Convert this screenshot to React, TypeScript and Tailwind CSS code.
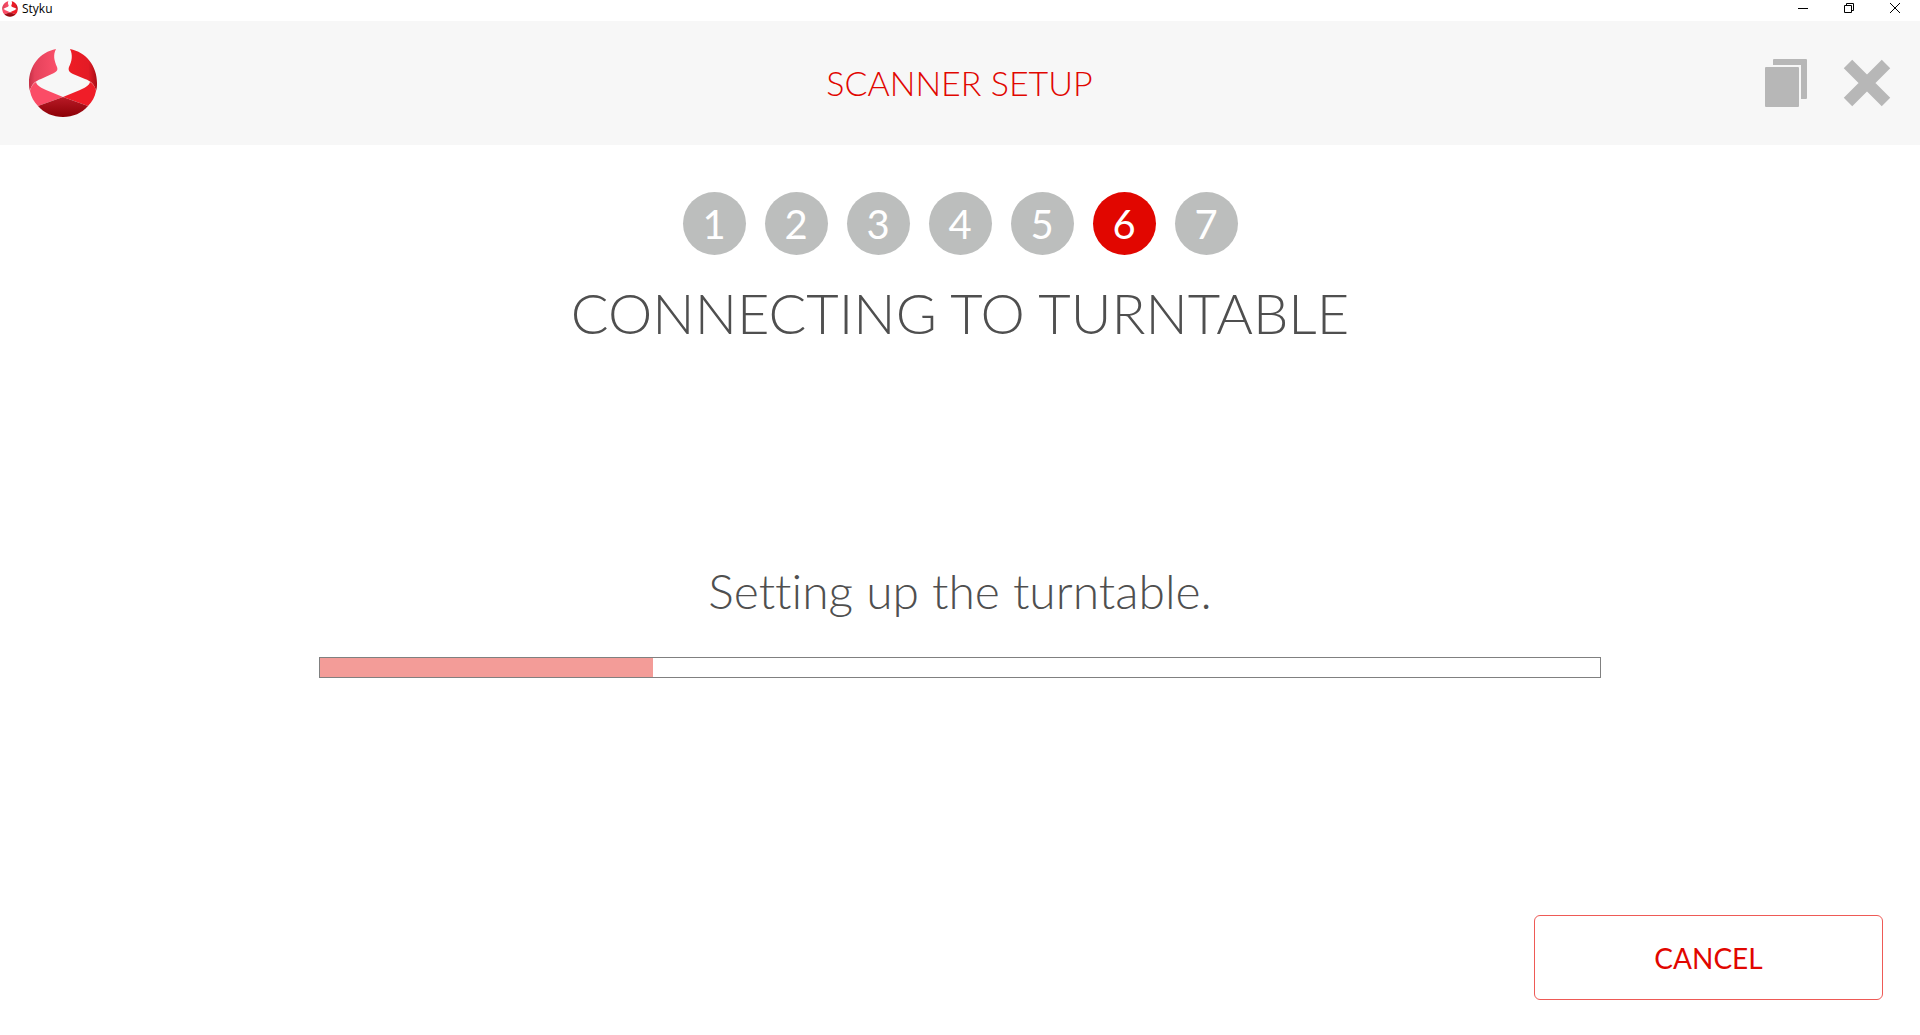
import React, { useState } from 'react';

const STEPS = [1, 2, 3, 4, 5, 6, 7];

function Logo({ className }: { className: string }) {
  return (
    <svg viewBox="0 0 70 70" className={className} aria-hidden="true">
      <defs>
        <linearGradient id="logo-left" x1="0" y1="0" x2="1" y2="0">
          <stop offset="0" stopColor="#c42f45" />
          <stop offset="0.2" stopColor="#e5425b" />
          <stop offset="1" stopColor="#fb506a" />
        </linearGradient>
        <linearGradient id="logo-right" x1="0" y1="0" x2="1" y2="0">
          <stop offset="0" stopColor="#ee1c25" />
          <stop offset="0.7" stopColor="#e31b25" />
          <stop offset="1" stopColor="#a80c14" />
        </linearGradient>
        <linearGradient id="logo-base" x1="0" y1="0" x2="0" y2="1">
          <stop offset="0" stopColor="#b81a26" />
          <stop offset="1" stopColor="#8c0006" />
        </linearGradient>
      </defs>
      <path
        d="M28 1C12 4 1 18 1 35C1 38 1 40 2 43C3 37 7 33 13 31L26 25C29 23 30 22 29 19C26 12 25 7 28 1Z"
        fill="url(#logo-left)"
      />
      <path
        d="M42 1C58 4 69 18 69 35C69 38 69 40 68 43C67 37 63 33 57 31L45 26C41 24 40 22 41 19C44 13 45 7 42 1Z"
        fill="url(#logo-right)"
      />
      <path d="M2 43C3 38 5 36 8 34C9 38 14 40 18 42L35 49L10 58C6 54 3 49 2 43Z" fill="#fb4c66" />
      <path d="M68 43C67 38 65 36 62 34C61 38 56 40 52 42L35 49L60 58C64 54 67 49 68 43Z" fill="#f01d28" />
      <path d="M35 49L60 58C54 65 45 69 35 69C25 69 16 65 10 58Z" fill="url(#logo-base)" />
    </svg>
  );
}

export default function App() {
  const [currentStep] = useState(6);
  const [progress] = useState(26);

  return (
    <div className="flex min-h-screen flex-col bg-white font-['Lato','Open_Sans',sans-serif] text-[#4f4f4f]">
      {/* Window title bar */}
      <div className="flex h-[21px] items-start justify-between text-black">
        <div className="flex items-center gap-1 pt-px pl-0.5">
          <Logo className="size-4" />
          <span className="font-['Open_Sans',sans-serif] text-xs leading-4">Styku</span>
        </div>
        <div className="flex pr-0.5">
          <button aria-label="Minimize" className="flex h-4 w-[46px] items-center justify-center">
            <svg viewBox="0 0 10 10" className="size-2.5" shapeRendering="crispEdges">
              <path d="M0 5h10v1H0z" />
            </svg>
          </button>
          <button aria-label="Restore" className="flex h-4 w-[46px] items-center justify-center">
            <svg viewBox="0 0 10 10" className="size-2.5" fill="none" stroke="black">
              <path d="M.5 2.5h7v7h-7zM2.5 2.5v-2h7v7h-2" />
            </svg>
          </button>
          <button aria-label="Close window" className="flex h-4 w-[46px] items-center justify-center">
            <svg viewBox="0 0 10 10" className="size-2.5" stroke="black">
              <path d="M0 0l10 10M10 0L0 10" />
            </svg>
          </button>
        </div>
      </div>

      {/* Header */}
      <header className="grid h-[124px] grid-cols-3 items-center bg-[#f7f7f7] pr-[29px] pl-7">
        <Logo className="size-[70px]" />
        <h1 className="pb-0.5 text-center text-[34px] font-light text-[#e10600]">SCANNER SETUP</h1>
        <div className="flex items-center justify-end gap-9">
          <button aria-label="Copy">
            <svg viewBox="0 0 42 48" className="h-12 w-[42px]" fill="#b7b7b7">
              <rect y="8" width="34" height="40" rx="1" />
              <path d="M9 0h32a1 1 0 0 1 1 1v38a1 1 0 0 1-1 1h-5V6H8V1a1 1 0 0 1 1-1z" />
            </svg>
          </button>
          <button aria-label="Close">
            <svg viewBox="0 0 48 48" className="size-12" stroke="#b7b7b7" strokeWidth="12">
              <path d="M5 5l38 38M43 5L5 43" />
            </svg>
          </button>
        </div>
      </header>

      <main className="flex flex-1 flex-col items-center pt-[47px]">
        <ol className="flex gap-[19px]">
          {STEPS.map((step) => (
            <li
              key={step}
              className={`flex size-[63px] items-center justify-center rounded-full text-[40px] leading-none text-white ${
                step === currentStep ? 'bg-[#e10600]' : 'bg-[#bcbebd]'
              }`}
            >
              {step}
            </li>
          ))}
        </ol>
        <h2 className="mt-6 text-[56px] leading-[68px] font-light">CONNECTING TO TURNTABLE</h2>

        {/* Progress */}
        <p
          id="setup-status"
          className="mt-[210px] text-[48px] leading-[68px] font-light [font-variant-ligatures:none]"
        >
          Setting up the turntable.
        </p>
        <div
          role="progressbar"
          aria-labelledby="setup-status"
          aria-valuenow={progress}
          className="mt-8 box-content h-[19px] w-2/3 border border-[#808080]"
        >
          <div className="h-full bg-[#f39c98]" style={{ width: `${progress}%` }} />
        </div>
      </main>

      <footer className="flex justify-end pr-[37px] pb-[35px]">
        <button className="h-[85px] w-[349px] rounded-md border border-[#ee5a56] text-[28px] text-[#e10600]">
          CANCEL
        </button>
      </footer>
    </div>
  );
}
